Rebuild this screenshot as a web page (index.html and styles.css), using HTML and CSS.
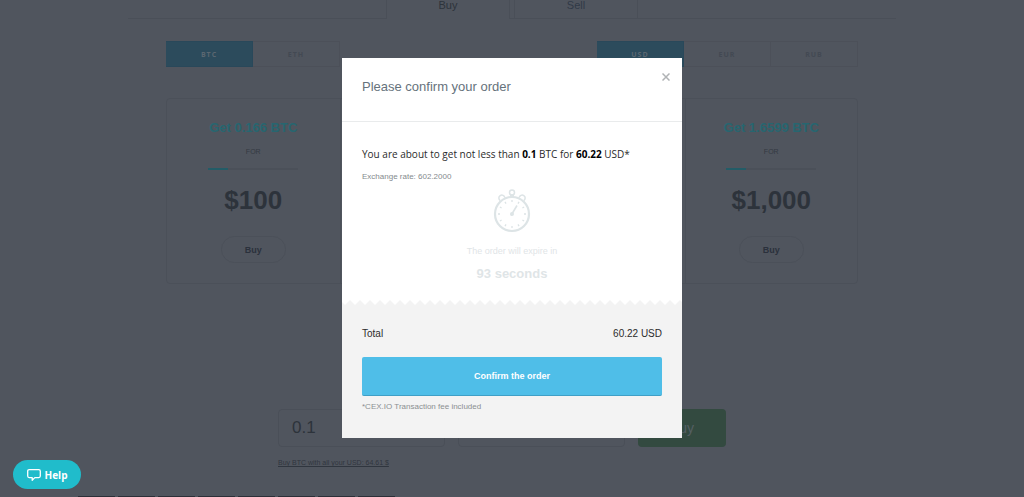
FILE: index.html
```html
<!DOCTYPE html>
<html lang="en">
<head>
  <meta charset="UTF-8" />
  <title>Buy BTC</title>
  <link rel="stylesheet" href="styles.css">
</head>
<body>
  <main class="page">
    <nav class="tabs">
      <a class="tab active" href="#buy">Buy</a>
      <a class="tab" href="#sell">Sell</a>
    </nav>

    <div class="content">
      <div class="pairs">
        <div class="switch">
          <button class="active" type="button">BTC</button>
          <button type="button">ETH</button>
        </div>
        <div class="switch">
          <button class="active" type="button">USD</button>
          <button type="button">EUR</button>
          <button type="button">RUB</button>
        </div>
      </div>

      <div class="offers">
        <div class="offer">
          <h3>Get 0.166 BTC</h3>
          <span class="for">FOR</span>
          <div class="divider"></div>
          <p class="price">$100</p>
          <button class="buy" type="button">Buy</button>
        </div>
        <div class="offer"></div>
        <div class="offer"></div>
        <div class="offer">
          <h3>Get 1.6599 BTC</h3>
          <span class="for">FOR</span>
          <div class="divider"></div>
          <p class="price">$1,000</p>
          <button class="buy" type="button">Buy</button>
        </div>
      </div>

      <form class="order">
        <div class="order-row">
          <input type="text" value="0.1" aria-label="Amount in BTC" />
          <input type="text" aria-label="Amount in USD" />
          <button type="button">Buy</button>
        </div>
        <a href="#all">Buy BTC with all your USD: 64.61 $</a>
      </form>
    </div>

    <div class="thumbs">
      <i></i><i></i><i></i><i></i><i></i><i></i><i></i><i></i>
    </div>
  </main>

  <div class="overlay">
    <section class="modal" role="dialog" aria-labelledby="modalTitle">
      <header class="modal-head">
        <h2 id="modalTitle">Please confirm your order</h2>
        <button class="close" type="button" aria-label="Close">
          <svg width="8" height="8" viewBox="0 0 8 8" fill="none" stroke="#b0b3b5" stroke-width="1.5"><path d="M.5.5l7 7M7.5.5l-7 7" /></svg>
        </button>
      </header>
      <div class="modal-body">
        <p class="about">You are about to get not less than <b>0.1</b> BTC for <b>60.22</b> USD*</p>
        <p class="rate">Exchange rate: 602.2000</p>
        <div class="timer">
          <svg width="38" height="44" viewBox="0 0 38 44" fill="none" stroke="#dde4e6">
            <circle cx="19" cy="25" r="17" stroke-width="2.2" />
            <circle cx="19" cy="3.5" r="2.5" stroke-width="1.5" />
            <path d="M17.5 6h3v2h-3z" fill="#dde4e6" stroke-width="1" />
            <path d="M7.2 11.6a3 3 0 1 1 4.6-3M30.8 11.6a3 3 0 1 0-4.6-3" stroke-width="1.5" />
            <path d="M19 11v2M19 37v2M5 25h2M31 25h2M12 12.9l1 1.7M25 35.400l1 1.700M6.900 18l1.700 1M29.400 31l1.700 1M6.900 32l1.700-1M29.400 19l1.700-1M12 37.100l1-1.700M26 12.900l-1 1.700" stroke-width="1.3" />
            <path d="M18 26.5l6-10" stroke-width="1.6" />
            <circle cx="19" cy="25" r="2" fill="#dde4e6" stroke="none" />
          </svg>
          <span>The order will expire in</span>
          <strong>93 seconds</strong>
        </div>
      </div>
      <footer class="modal-foot">
        <svg class="torn" width="100%" height="5" aria-hidden="true">
          <defs>
            <pattern id="teeth" width="10" height="5" patternUnits="userSpaceOnUse"><path d="M-2 0h10L3 5z" fill="#fff" /><path d="M8 0h10l-5 5z" fill="#fff" /></pattern>
          </defs>
          <rect width="100%" height="5" fill="url(#teeth)" />
        </svg>
        <div class="total">
          <span>Total</span>
          <span>60.22 USD</span>
        </div>
        <button class="confirm" type="button">Confirm the order</button>
        <p class="fee">*CEX.IO Transaction fee included</p>
      </footer>
    </section>
  </div>

  <button class="help" type="button">
    <svg width="14" height="12" viewBox="0 0 14 12" fill="none" stroke="#fff" stroke-width="1.3" stroke-linejoin="round"><path d="M2.2.7h9.6q1.5 0 1.5 1.5v4.9q0 1.5-1.5 1.5H7.8L5.2 11.2V8.600h-3Q.7 8.600.7 7.100V2.200Q.7.7 2.200.7z" /></svg>
    Help
  </button>
</body>
</html>
```

FILE: styles.css
```css
* { box-sizing: border-box; }
body { margin: 0; font-family: "Liberation Sans", Arial, sans-serif; background: #50555e; color: #2d333b; }
h2, h3, p { margin: 0; }
button { font-family: inherit; cursor: pointer; }

/* the page behind does not scroll while the dialog is open */
.page { height: 100vh; overflow: hidden; }

.tabs {
  display: flex; justify-content: center; gap: 4px;
  width: 75%; height: 19px; margin: 0 auto;
  border-bottom: 1px solid #4a4f58;
}
.tab {
  width: 124px; height: 19px; line-height: 10px; font-size: 11px;
  text-align: center; text-decoration: none; color: #303a47;
  border: solid #4a4f58; border-width: 0 1px;
}
.tab.active { background: #50555e; color: #2d333b; }

.content { max-width: 692px; margin: 0 auto; padding-top: 22px; }
.pairs { display: flex; justify-content: space-between; }
.switch { display: flex; }
.switch button {
  width: 87px; height: 26px; padding: 0; background: none;
  border: 1px solid #4c5059; border-left: 0;
  font: bold 7px "Open Sans", sans-serif; letter-spacing: 1px; color: #434953;
}
.switch .active { background: #2c4b5c; border-color: #29485a; color: #5b6771; }

.offers { display: grid; grid-template-columns: repeat(4, 1fr); margin-top: 31px; border: 1px solid #4b5059; border-radius: 4px; }
.offer {
  display: flex; flex-direction: column; align-items: center;
  height: 184px; padding-top: 21px; border-left: 1px solid #4b5059;
}
.offer:first-child { border-left: 0; }
.offer h3 { font-size: 13px; line-height: 16px; color: #276670; }
.for { margin-top: 11px; font-size: 7px; line-height: 10px; color: #343a43; }
.divider { width: 90px; height: 2px; margin-top: 11px; background: linear-gradient(90deg, #235c67 20px, #4b5059 20px); }
.price { margin-top: 14px; font-size: 26px; font-weight: bold; line-height: 32px; }
.buy {
  width: 65px; height: 27px; margin-top: 20px; padding: 0;
  background: none; border: 1px solid #4b5059; border-radius: 14px;
  font-size: 9px; font-weight: bold; color: #2b313c;
}

.order { width: 468px; margin: 125px auto 0; }
.order-row { display: flex; gap: 13px; width: 448px; }
.order input {
  flex: 1; min-width: 0; height: 38px; padding: 0 13px;
  background: none; border: 1px solid #4a4f58; border-radius: 4px;
  font: 17px "Liberation Sans", Arial, sans-serif; color: #2d333b;
}
.order button { width: 88px; height: 38px; background: #334a40; border: 0; border-radius: 4px; font-size: 14px; color: #555f63; }
.order a { display: inline-block; margin-top: 11px; font-size: 7px; line-height: 10px; color: #30363f; }

.thumbs { display: flex; gap: 3px; margin: 27px 0 0 78px; }
.thumbs i { width: 37px; height: 30px; background: #2c2f38; }

.overlay { position: fixed; inset: 0; display: flex; justify-content: center; align-items: flex-start; padding-top: 58px; }
.modal { width: 340px; background: #fff; }
.modal-head { display: flex; justify-content: space-between; align-items: flex-start; height: 64px; padding: 15px 12px 0 20px; border-bottom: 1px solid #e9ebec; }
.modal-head h2 { margin-top: 6px; font-size: 13px; font-weight: normal; line-height: 16px; color: #66727c; }
.close { display: flex; padding: 0; background: none; border: 0; }
.modal-body { padding: 23px 20px 0; }
.about { font: 10px/18px "Open Sans", sans-serif; color: #2b2b2b; }
.about b { color: #000; }
.rate { margin-top: 8px; font-size: 8px; line-height: 12px; color: #848a8e; }
.timer { display: flex; flex-direction: column; align-items: center; margin-top: 6px; color: #dfe5e7; }
.timer span { margin-top: 12px; font-size: 9px; line-height: 12px; }
.timer strong { margin-top: 9px; font-size: 13px; line-height: 16px; }

.modal-foot { margin-top: 18px; padding: 0 20px 25px; background: #f3f3f3; }
.torn { display: block; width: calc(100% + 40px); margin: 0 -20px 22px; }
.total { display: flex; justify-content: space-between; font-size: 10px; line-height: 14px; color: #2b2b2b; }
.confirm {
  display: block; width: 100%; height: 39px; margin-top: 16px; padding: 0;
  background: #4fbee8; border: 0; border-bottom: 1px solid #3f9fc6; border-radius: 2px;
  font-size: 9px; font-weight: bold; color: #fff;
}
.fee { margin-top: 5px; font-size: 8px; line-height: 12px; color: #8b8f92; }

.help {
  position: fixed; left: 13px; bottom: 8px;
  display: flex; justify-content: center; align-items: center; gap: 4px;
  width: 68px; height: 29px; padding: 0;
  background: #20bccb; border: 0; border-radius: 15px;
  font: bold 10px "Open Sans", sans-serif; color: #fff;
}
```
